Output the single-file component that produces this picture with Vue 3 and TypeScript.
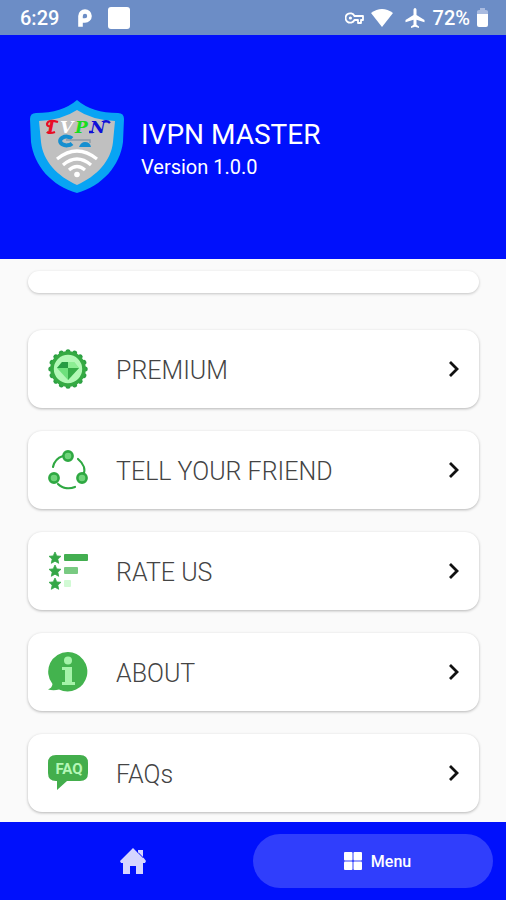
<script setup lang="ts">
import { ref } from 'vue'

type IconName = 'premium' | 'share' | 'rate' | 'about' | 'faq'

interface MenuItem {
  icon: IconName
  label: string
}

const items: MenuItem[] = [
  { icon: 'premium', label: 'PREMIUM' },
  { icon: 'share', label: 'TELL YOUR FRIEND' },
  { icon: 'rate', label: 'RATE US' },
  { icon: 'about', label: 'ABOUT' },
  { icon: 'faq', label: 'FAQs' },
]

const teeth: number[] = Array.from({ length: 16 }, (_, i) => (i * 360) / 16)
const starRows: number[] = [0, 13, 26]
const tab = ref<'home' | 'menu'>('menu')
</script>

<template>
  <div class="screen">
    <div class="status">
      <span class="clock">6:29</span>
      <svg class="s-p" width="14" height="18" viewBox="0 0 14 18" aria-hidden="true">
        <path d="M2.500 15.500V7A4.500 4.500 0 1 1 7 11.500" fill="none" stroke="#fff" stroke-width="4.600" stroke-linecap="square" />
      </svg>
      <span class="s-square"></span>
      <svg class="s-key" width="19" height="12" viewBox="0 0 19 12" aria-hidden="true">
        <path d="M9.500 4A4.700 4.700 0 1 0 9.500 8H13v3h3V8h2V4Z" fill="none" stroke="#fff" stroke-width="1.800" stroke-linejoin="round" />
        <circle cx="5.400" cy="6" r="1.600" fill="#fff" />
      </svg>
      <svg class="s-wifi" width="22" height="18" viewBox="0 0 22 18" aria-hidden="true">
        <path d="M0 4Q11-4 22 4L11 18Z" fill="#fff" />
      </svg>
      <svg class="s-plane" width="20" height="20" viewBox="0 0 20 20" aria-hidden="true">
        <path d="M10 0c1 0 1.500 1 1.500 2v5l8 5v2.200l-8-2.500v5l2.500 1.800V20l-4-1.200L6 20v-1.500l2.500-1.800v-5l-8 2.500V12l8-5V2c0-1 .5-2 1.500-2Z" fill="#fff" />
      </svg>
      <span class="battery-text">72%</span>
      <svg class="s-batt" width="11" height="19" viewBox="0 0 11 19" aria-hidden="true">
        <path d="M0 6V3.500Q0 2 2 2h1V0h5v2h1q2 0 2 1.500V6Z" fill="#a9bbe0" />
        <path d="M0 6h11v11q0 2-2 2H2q-2 0-2-2Z" fill="#fff" />
      </svg>
    </div>

    <header class="header">
      <svg class="logo" width="94" height="94" viewBox="0 0 94 94" aria-hidden="true">
        <path d="M47 0Q62 13 88 13Q94 13 94 19L93 42C90 66 72 86 47 93C22 86 4 66 1 42L0 19Q0 13 6 13Q32 13 47 0Z" fill="#08a4f4" />
        <path d="M47 10Q62 20 85 21L83 42C81 61 67 76 47 85C27 76 13 61 11 42L9 21Q32 20 47 10Z" fill="#c0c0c0" />
        <g class="logo-letters">
          <text x="17" y="33" fill="#e80c24">I</text>
          <text x="30" y="33" fill="#fff">V</text>
          <text x="45" y="33" fill="#18dc20">P</text>
          <text x="60" y="33" fill="#1010d8">N</text>
          <path d="M28 22Q18 19 17 24Q17 27 22 26M17 32Q20 34 25 32" fill="none" stroke="#e80c24" stroke-width="2.200" />
          <path d="M73 22Q77 20 80 23M59 32H63" fill="none" stroke="#1010d8" stroke-width="2.400" />
        </g>
        <path d="M42 38.500A6.500 4.400 0 1 0 42 43.500" fill="none" stroke="#168fd0" stroke-width="4" />
        <path d="M36 40H60V43" fill="none" stroke="#8f9ba6" stroke-width="1.400" />
        <path d="M49 47Q51 42 55 42Q60 42 61 47Z" fill="#168fd0" />
        <g fill="none" stroke="#fff" stroke-width="3.200">
          <path d="M27 59Q47 43 67 59" />
          <path d="M33 65Q47 53 61 65" />
          <path d="M39 70Q47 63 55 70" />
        </g>
        <circle cx="47" cy="74.500" r="2.800" fill="#fff" />
      </svg>
      <div class="app-info">
        <h1 class="title">IVPN MASTER</h1>
        <p class="version">Version 1.0.0</p>
      </div>
    </header>

    <main class="content">
      <div class="stub"></div>
      <nav class="list" aria-label="Options">
        <button v-for="item in items" :key="item.icon" type="button" class="card">
          <svg class="icon" width="40" height="40" viewBox="0 0 40 40" aria-hidden="true">
            <g v-if="item.icon === 'premium'">
              <circle v-for="a in teeth" :key="a" cx="20" cy="2.800" r="2.500" fill="#2da044" :transform="`rotate(${a} 20 20)`" />
              <circle cx="20" cy="20" r="16" fill="#b2f8b6" stroke="#35aa43" stroke-width="3.600" />
              <path d="M14 13H26L31 19L20 31L9 19Z" fill="#6ee07c" />
              <path d="M14 13H20V19H9Z" fill="#279b44" />
              <path d="M20 19H31L20 31Z" fill="#36ad49" />
              <path d="M20 13H26L31 19H20Z" fill="#8cee94" />
            </g>
            <g v-else-if="item.icon === 'share'" fill="none" stroke="#2fa842" stroke-linecap="round">
              <path d="M5 17C6 12 9 8 15 6M30 9C36 14 38 20 35 25M10 34C15 39 22 39 27 37" stroke-width="2.200" />
              <g fill="#70d47b" stroke-width="2.600">
                <circle cx="20" cy="6" r="4.600" />
                <circle cx="6" cy="28" r="4.600" />
                <circle cx="34" cy="28" r="4.600" />
              </g>
            </g>
            <g v-else-if="item.icon === 'rate'">
              <path v-for="y in starRows" :key="y" d="M7 1L8.800 4.900L13 5.300L9.800 8.100L10.700 12.300L7 10.200L3.300 12.300L4.200 8.100L1 5.300L5.200 4.900Z" fill="#35a747" stroke="#35a747" stroke-width=".8" stroke-linejoin="round" :transform="`translate(0 ${y})`" />
              <rect x="16" y="3" width="24" height="7" rx="1" fill="#43ae50" />
              <rect x="16" y="16" width="14" height="7" rx="1" fill="#79ca82" />
              <rect x="16" y="29" width="7" height="7" rx="1" fill="#d1fad4" />
            </g>
            <g v-else-if="item.icon === 'about'">
              <path d="M20 0A19.700 19.700 0 1 1 11 37.400Q6 39 0 37.500Q4 36 4.500 32A19.700 19.700 0 0 1 20 0Z" fill="#43b34e" />
              <circle cx="20" cy="8.500" r="4" fill="#a5f3a9" />
              <path d="M14 15H24V30H27V33H14V30H17V18H14Z" fill="#a5f3a9" />
            </g>
            <g v-else>
              <path d="M8 2H32Q40 2 40 10V20Q40 28 32 28H19L9 37V28H8Q0 28 0 20V10Q0 2 8 2Z" fill="#43ae4c" />
              <text class="faq-text" x="21" y="21" text-anchor="middle">FAQ</text>
            </g>
          </svg>
          <span class="label">{{ item.label }}</span>
          <svg class="chevron" width="12" height="18" viewBox="0 0 12 18" aria-hidden="true">
            <path d="M2 2L9 9L2 16" fill="none" stroke="#111" stroke-width="2.800" />
          </svg>
        </button>
      </nav>
    </main>

    <nav class="tabs" aria-label="Main">
      <button type="button" class="tab" :class="{ active: tab === 'home' }" aria-label="Home" @click="tab = 'home'">
        <svg width="26" height="26" viewBox="0 0 26 26" aria-hidden="true">
          <path d="M13 0L18 5V2H23V9L26 13L25 15H23V26H16V18H10V26H3V15H1L0 13Z" fill="#d5d5ff" />
          <path d="M18 4.500L23.500 10" stroke="#0010fc" stroke-width="1" />
        </svg>
      </button>
      <button type="button" class="tab tab-menu" :class="{ active: tab === 'menu' }" @click="tab = 'menu'">
        <svg width="20" height="20" viewBox="0 0 20 20" fill="#fff" aria-hidden="true">
          <rect x="1" y="1" width="8.500" height="8.500" rx="1" />
          <rect x="10.500" y="1" width="8.500" height="8.500" rx="1" />
          <rect x="1" y="10.500" width="8.500" height="8.500" rx="1" />
          <rect x="10.500" y="10.500" width="8.500" height="8.500" rx="1" />
        </svg>
        <span>Menu</span>
      </button>
    </nav>
  </div>
</template>

<style>
body {
  margin: 0;
  background: #fafafa;
}
</style>

<style scoped>
.screen {
  display: flex;
  flex-direction: column;
  min-height: 100vh;
  font-family: Roboto, 'Liberation Sans', sans-serif;
}
.status {
  display: flex;
  align-items: center;
  box-sizing: border-box;
  height: 35px;
  padding: 0 18px 0 20px;
  background: #6c8dc6;
  color: #fff;
  font-size: 20px;
  font-weight: 500;
}
.clock {
  margin-right: 19px;
}
.s-square {
  width: 22px;
  height: 22px;
  margin: 0 auto 0 16px;
  border-radius: 3px;
  background: #fff;
}
.s-wifi {
  margin-left: 7px;
}
.s-plane {
  margin: 0 8px 0 12px;
}
.s-batt {
  margin-left: 7px;
}
.header {
  display: flex;
  align-items: center;
  gap: 17px;
  box-sizing: border-box;
  min-height: 224px;
  padding: 0 30px;
  background: #0010fc;
  color: #fff;
}
.logo-letters {
  font-family: 'DejaVu Serif', serif;
  font-size: 17px;
  font-style: italic;
  font-weight: 700;
}
.app-info {
  padding-top: 4px;
}
.title {
  margin: 0;
  font-size: 28px;
  line-height: 36px;
  font-weight: 400;
}
.version {
  margin: 0;
  font-size: 20px;
  line-height: 28px;
}
.content {
  flex: 1;
  padding: 12px 27px 10px 28px;
  background: #fafafa;
}
.stub {
  height: 22px;
  margin-bottom: 37px;
  border-radius: 11px;
  background: #fff;
  box-shadow: 0 1px 3px rgba(0, 0, 0, 0.22);
}
.list {
  display: flex;
  flex-direction: column;
  gap: 23px;
}
.card {
  display: flex;
  align-items: center;
  height: 78px;
  padding: 0 19px 0 20px;
  border: 0;
  border-radius: 14px;
  background: #fff;
  box-shadow: 0 1px 3px rgba(0, 0, 0, 0.28);
  color: #444;
  font-family: inherit;
  font-size: 25px;
  font-weight: 300;
  text-align: left;
}
.label {
  flex: 1;
  margin-left: 28px;
  padding-top: 2px;
}
.faq-text {
  font-size: 15px;
  font-weight: 700;
  fill: #b5f7b7;
}
.tabs {
  display: grid;
  grid-template-columns: 1fr 1fr;
  box-sizing: border-box;
  height: 78px;
  padding: 12px 13px;
  background: #0010fc;
}
.tab {
  display: flex;
  align-items: center;
  justify-content: center;
  gap: 8px;
  padding: 0;
  border: 0;
  border-radius: 27px;
  background: transparent;
  color: #fff;
  font-family: inherit;
  font-size: 16px;
  font-weight: 500;
}
.tab-menu {
  padding-left: 8px;
}
.tab.active {
  background: #303efc;
}
</style>
